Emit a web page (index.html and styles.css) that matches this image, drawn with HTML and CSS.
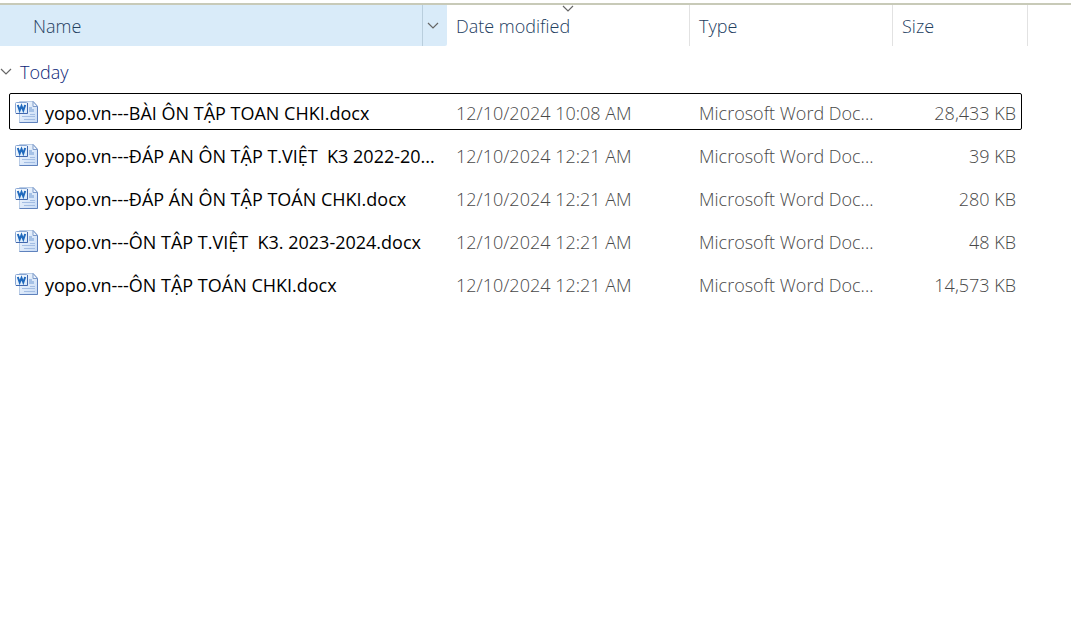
FILE: index.html
```html
<!DOCTYPE html>
<html lang="en">
<head>
<meta charset="utf-8">
<meta name="viewport" content="width=device-width, initial-scale=1">
<title>Files</title>
<link rel="stylesheet" href="styles.css">
</head>
<body>
<svg width="0" height="0" class="defs" aria-hidden="true">
  <defs>
    <linearGradient id="page" x1="0" y1="0" x2="1" y2="1">
      <stop offset="0" stop-color="#f6fafe"/><stop offset="1" stop-color="#c6daf5"/>
    </linearGradient>
    <linearGradient id="badge" x1="0" y1="0" x2="1" y2="1">
      <stop offset="0" stop-color="#ffffff"/><stop offset="1" stop-color="#d3e6f9"/>
    </linearGradient>
    <symbol id="word" viewBox="0 0 24 24">
      <path d="M4.500 1.500H18.500L22.500 6V22.500H4.500Z" fill="url(#page)" stroke="#b9cce6"/>
      <path d="M22.500 6V22.500H4.500" fill="none" stroke="#5f82bd"/>
      <path d="M18 1.500V6.500H22.500Z" fill="#edf4fc" stroke="#7f9ccb"/>
      <path d="M14 7h3v2h2v3h-5z" fill="#a5c1e6"/>
      <path d="M15 14.500H20M7 16.500H20M9 19.500H20" stroke="#a3bde3"/>
      <rect x="0.500" y="2.500" width="12" height="11" rx="1" fill="url(#badge)" stroke="#88a6d4"/>
      <path d="M1 13.500H12.500V3" fill="none" stroke="#4268ad"/>
      <path d="M2.800 5L4.700 10.500L6.500 6L8.300 10.500L10.200 5" fill="none" stroke="#1f69bd" stroke-width="2"/>
    </symbol>
    <symbol id="chevron" viewBox="0 0 12 7">
      <path d="M1 1L6 6L11 1" fill="none" stroke="currentColor" stroke-width="1.200"/>
    </symbol>
  </defs>
</svg>
<table class="files">
  <thead>
    <tr class="head">
      <th class="head-name" scope="col"><button class="sort">Name</button><button class="filter" aria-label="Filter by name"><svg class="chevron"><use href="#chevron"/></svg></button></th>
      <th scope="col" aria-sort="descending"><button class="sort">Date modified</button><svg class="chevron sorted"><use href="#chevron"/></svg></th>
      <th scope="col"><button class="sort">Type</button></th>
      <th scope="col"><button class="sort">Size</button></th>
    </tr>
  </thead>
  <tbody>
    <tr class="group"><th colspan="4" scope="rowgroup"><button class="toggle" aria-expanded="true"><svg class="chevron"><use href="#chevron"/></svg>Today</button></th></tr>
    <tr class="file focused"><td class="name"><svg class="icon"><use href="#word"/></svg><span class="label">yopo.vn---BÀI ÔN TẬP TOAN CHKI.docx</span></td><td>12/10/2024 10:08 AM</td><td>Microsoft Word Doc...</td><td class="size">28,433 KB</td></tr>
    <tr class="file"><td class="name"><svg class="icon"><use href="#word"/></svg><span class="label">yopo.vn---ĐÁP AN ÔN TẬP T.VIỆT  K3 2022-20...</span></td><td>12/10/2024 12:21 AM</td><td>Microsoft Word Doc...</td><td class="size">39 KB</td></tr>
    <tr class="file"><td class="name"><svg class="icon"><use href="#word"/></svg><span class="label">yopo.vn---ĐÁP ÁN ÔN TẬP TOÁN CHKI.docx</span></td><td>12/10/2024 12:21 AM</td><td>Microsoft Word Doc...</td><td class="size">280 KB</td></tr>
    <tr class="file"><td class="name"><svg class="icon"><use href="#word"/></svg><span class="label">yopo.vn---ÔN TÂP T.VIỆT  K3. 2023-2024.docx</span></td><td>12/10/2024 12:21 AM</td><td>Microsoft Word Doc...</td><td class="size">48 KB</td></tr>
    <tr class="file"><td class="name"><svg class="icon"><use href="#word"/></svg><span class="label">yopo.vn---ÔN TẬP TOÁN CHKI.docx</span></td><td>12/10/2024 12:21 AM</td><td>Microsoft Word Doc...</td><td class="size">14,573 KB</td></tr>
  </tbody>
</table>
</body>
</html>
```
FILE: styles.css
```css
* { box-sizing: border-box; }
body {
  margin: 0;
  padding-top: 3px;
  background: #fff;
  color: #484848;
  font: 300 18px/24px "Segoe UI", "Open Sans", "Noto Sans", sans-serif;
}
.defs { position: absolute; }
button {
  padding: 0;
  border: 0;
  background: none;
  color: inherit;
  font: inherit;
  text-align: left;
}
.files, thead, tbody { display: block; }
.files { border-top: 2px solid #c8cab8; }
.head, .file {
  display: grid;
  grid-template-columns: minmax(0, 1fr) 243px 203px 135px;
}
.head {
  max-width: 1028px;
  color: #23405f;
}
.head th {
  position: relative;
  display: flex;
  height: 41px;
  padding: 0;
  border-right: 1px solid #e2e2e2;
  font-weight: inherit;
}
.sort {
  flex: 1;
  padding: 0 0 0 9px;
}
.head .head-name {
  border-right: 0;
  border-radius: 0 0 2px 0;
  background: #d9ebf9;
}
.head-name .sort { padding-left: 33px; }
.filter {
  display: flex;
  align-items: center;
  width: 25px;
  padding-left: 4px;
  border-left: 1px solid #b9cedd;
  color: #5c6670;
}
.chevron {
  display: block;
  width: 12px;
  height: 7px;
  color: #666;
}
.sorted {
  position: absolute;
  top: 0;
  left: calc(50% - 6px);
}
.group, .group th { display: block; }
.group th {
  padding: 0;
  font-weight: inherit;
  text-align: left;
}
.toggle {
  display: flex;
  align-items: center;
  gap: 8px;
  height: 47px;
  padding-top: 4px;
  color: #0c1f78;
}
.file {
  max-width: 1013px;
  height: 37px;
  margin: 0 0 6px 9px;
  border: 1px solid transparent;
  border-radius: 2px;
  grid-template-columns: minmax(0, 1fr) 243px 203px 128px;
}
.focused { border-color: #000; }
.file td {
  padding: 7px 0 0 9px;
  line-height: 24px;
  white-space: pre;
}
.file .name {
  display: flex;
  gap: 6px;
  padding-left: 5px;
  color: #000;
  font-weight: 400;
}
.icon {
  flex: none;
  width: 24px;
  height: 24px;
  margin-top: -1px;
}
.file .size {
  padding: 7px 5px 0 0;
  text-align: right;
}
```
